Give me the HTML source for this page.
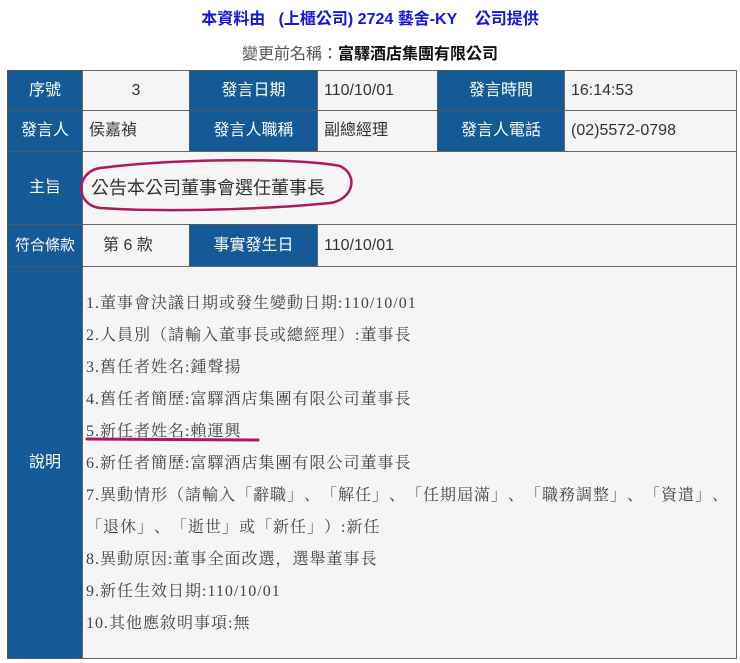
<!DOCTYPE html>
<html><head><meta charset="utf-8"><style>
body{margin:0;width:740px;height:663px;background:#fff;position:relative;overflow:hidden;font-family:"Liberation Sans","Noto Sans CJK TC",sans-serif;}
.a{position:absolute;box-sizing:border-box;}
.h{background:#135a96;color:#fff;font-size:16px;display:flex;align-items:center;justify-content:center;border:1px solid #555;line-height:16px;}
.c{background:#f5f5f5;color:#333;font-size:16px;display:flex;align-items:center;padding-left:6px;border:1px solid #666;line-height:16px;}
.d{position:absolute;left:86px;font-family:"Liberation Serif","Noto Serif CJK SC",serif;font-size:16px;color:#444;white-space:nowrap;letter-spacing:1px;text-spacing-trim:space-all;font-feature-settings:"fwid";}
.d span{letter-spacing:0}
</style></head><body>
<div class="a" style="left:0;top:5px;width:740px;text-align:center;color:#1616d8;font-weight:bold;font-size:16px;">本資料由 &nbsp; (上櫃公司) 2724 藝舍-KY &nbsp;&nbsp; 公司提供</div>
<div class="a" style="left:0;top:40px;width:740px;text-align:center;color:#555;font-size:16px;">變更前名稱：<b style="color:#111">富驛酒店集團有限公司</b></div>

<div class="a" style="left:7px;top:70px;width:730px;height:589px;border:1px solid #555;background:#f5f5f5"></div>

<div class="a h" style="left:7px;top:70px;width:76px;height:41px">序號</div>
<div class="a c" style="left:82px;top:70px;width:108px;height:41px;justify-content:center;padding:0">3</div>
<div class="a h" style="left:189px;top:70px;width:129px;height:41px">發言日期</div>
<div class="a c" style="left:317px;top:70px;width:121px;height:41px">110/10/01</div>
<div class="a h" style="left:437px;top:70px;width:128px;height:41px">發言時間</div>
<div class="a c" style="left:564px;top:70px;width:173px;height:41px">16:14:53</div>

<div class="a h" style="left:7px;top:110px;width:76px;height:42px">發言人</div>
<div class="a c" style="left:82px;top:110px;width:108px;height:42px">侯嘉禎</div>
<div class="a h" style="left:189px;top:110px;width:129px;height:42px">發言人職稱</div>
<div class="a c" style="left:317px;top:110px;width:121px;height:42px">副總經理</div>
<div class="a h" style="left:437px;top:110px;width:128px;height:42px">發言人電話</div>
<div class="a c" style="left:564px;top:110px;width:173px;height:42px">(02)5572-0798</div>

<div class="a h" style="left:7px;top:151px;width:76px;height:74px">主旨</div>
<div class="a c" style="left:82px;top:151px;width:655px;height:74px;padding-left:8px;font-size:18px;line-height:18px">公告本公司董事會選任董事長</div>

<div class="a h" style="left:7px;top:224px;width:76px;height:43px;font-size:15px">符合條款</div>
<div class="a c" style="left:82px;top:224px;width:108px;height:43px;padding-left:20px">第 6 款</div>
<div class="a h" style="left:189px;top:224px;width:129px;height:43px">事實發生日</div>
<div class="a c" style="left:317px;top:224px;width:420px;height:43px">110/10/01</div>

<div class="a h" style="left:7px;top:266px;width:76px;height:393px">說明</div>
<div class="a c" style="left:82px;top:266px;width:655px;height:393px"></div>

<div class="d" style="top:290px">1.董事會決議日期或發生變動日期:110/10/01</div>
<div class="d" style="top:322px">2.人員別（請輸入董事長或總經理）:董事長</div>
<div class="d" style="top:354px">3.舊任者姓名:鍾聲揚</div>
<div class="d" style="top:386px">4.舊任者簡歷:富驛酒店集團有限公司董事長</div>
<div class="d" style="top:418px">5.新任者姓名:賴運興</div>
<div class="d" style="top:450px">6.新任者簡歷:富驛酒店集團有限公司董事長</div>
<div class="d" style="top:482px">7.異動情形（請輸入「辭職」、「解任」、「任期屆滿」、「職務調整」、「資遣」、</div>
<div class="d" style="top:514px">「退休」、「逝世」或「新任」）:新任</div>
<div class="d" style="top:546px">8.異動原因:董事全面改選，選舉董事長</div>
<div class="d" style="top:578px">9.新任生效日期:110/10/01</div>
<div class="d" style="top:610px">10.其他應敘明事項:無</div>

<svg class="a" style="left:0;top:0" width="740" height="663">
<path d="M100 168 C180 158 300 158 340 166 C360 176 352 200 330 203 C260 210 160 212 100 208 C75 205 75 172 100 168 Z" fill="none" stroke="#b0185e" stroke-width="2.5"/>
<path d="M87 439 L258 440" fill="none" stroke="#b0185e" stroke-width="3" stroke-linecap="round"/>
</svg>
</body></html>
